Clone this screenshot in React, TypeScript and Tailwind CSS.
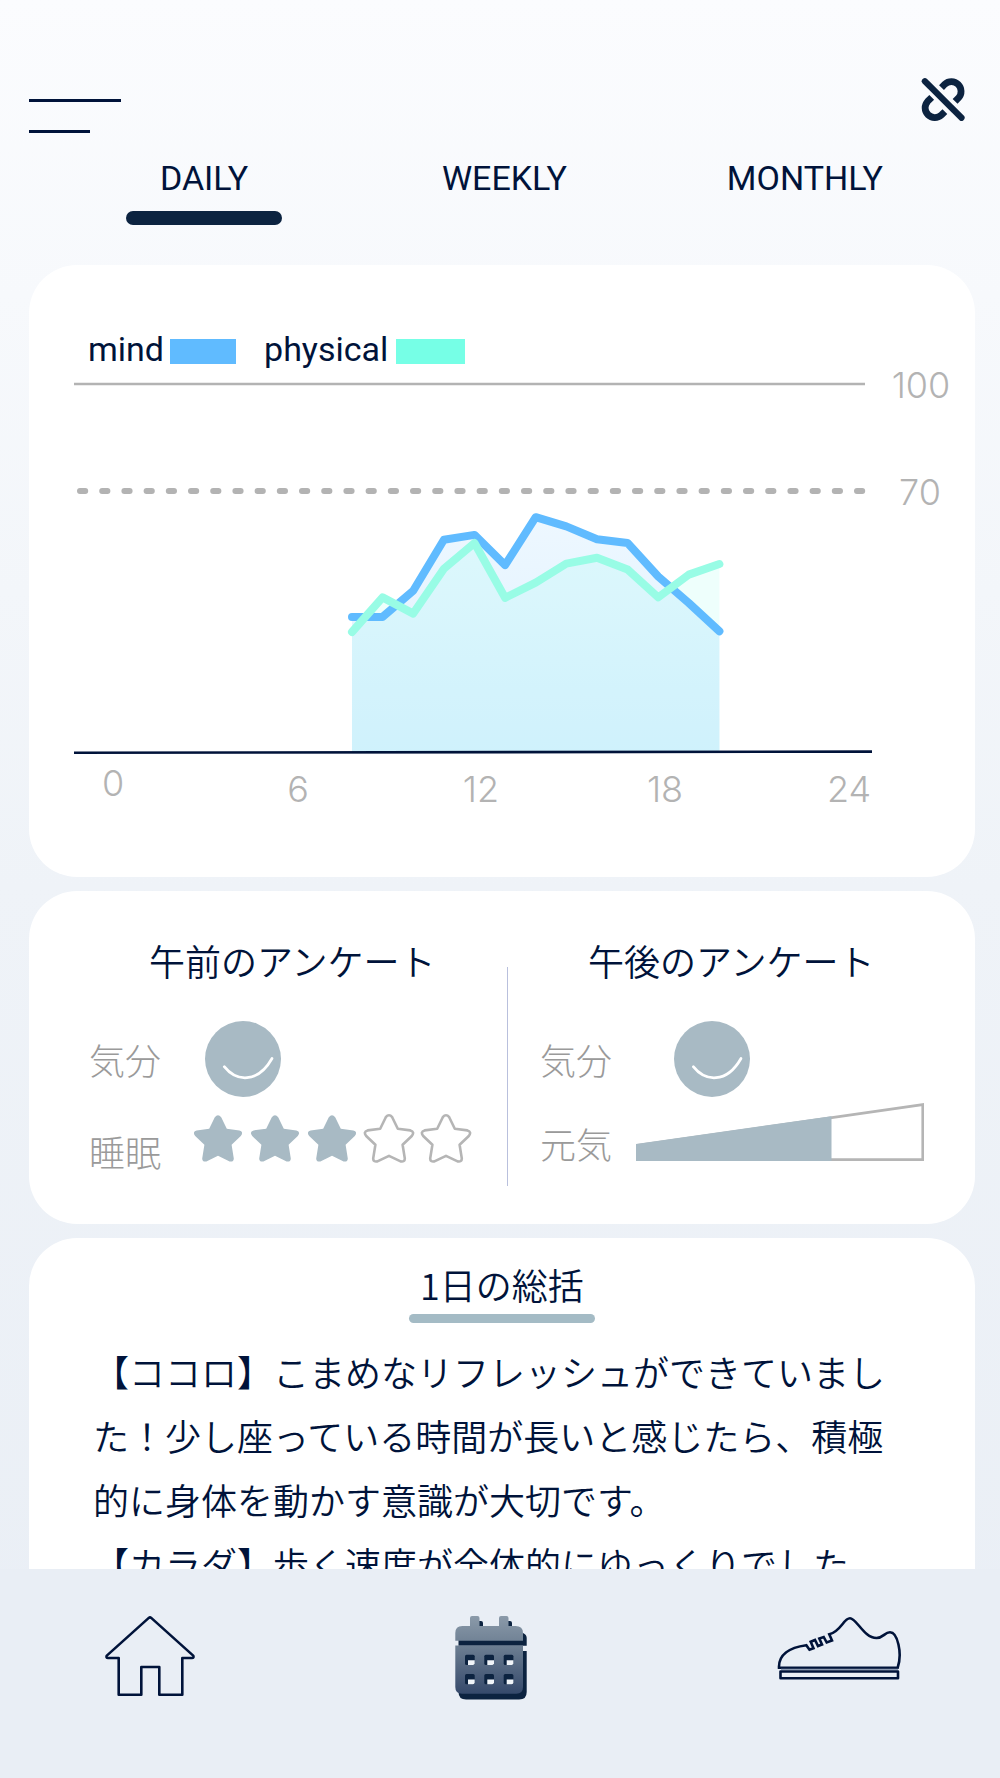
import React, { useState } from 'react';

const tabs = ['DAILY', 'WEEKLY', 'MONTHLY'];

const mind = [36.7, 36.7, 43.8, 57.7, 59, 50.8, 63.8, 61.3, 57.8, 56.8, 47.7, 40.5, 32.8];
const physical = [32.6, 42, 37.6, 49.8, 56.8, 41.9, 46, 51.2, 52.8, 49.6, 42, 48.2, 51.1];

// plot area inside the chart svg
const BASE_Y = 382;
const START_X = 323;
const STEP_X = 30.62;

const toPoints = (values: number[]) =>
  values.map((v, i) => `${(START_X + i * STEP_X).toFixed(1)},${(BASE_Y - v * 3.68).toFixed(1)}`).join(' ');

const toArea = (values: number[]) =>
  `${START_X},${BASE_Y} ${toPoints(values)} ${START_X + (values.length - 1) * STEP_X},${BASE_Y}`;

const UnlinkIcon: React.FC = () => (
  <svg className="size-11" viewBox="0 0 44 44" fill="none" stroke="#0c2340" strokeWidth={6.8}>
    <path d="M20.5 10.6l3.3-3.4a9.7 9.7 0 0 1 13.8 13.6l-3.5 3.6" />
    <path d="M10.7 20.4l-4.1 4a9.7 9.7 0 0 0 13.8 13.6l3.5-3.4" />
    <path d="M3 3.4l38 37.6" stroke="#fafbfd" strokeWidth={9.6} />
    <path d="M3.9 4.2l36.6 36.6" strokeLinecap="round" strokeWidth={6.2} />
  </svg>
);

const SmileIcon: React.FC = () => (
  <svg className="size-[76px]" viewBox="0 0 76 76" role="img" aria-label="気分">
    <circle cx="38" cy="38" r="38" fill="#a8bac4" />
    <path d="M19.3 45.7C31 60.5 52.5 63 67 37.5" fill="none" stroke="#fff" strokeWidth={2.7} strokeLinecap="round" />
  </svg>
);

const StarIcon: React.FC<{ filled: boolean }> = ({ filled }) => (
  <svg
    className="w-[52px] h-[50px]"
    viewBox="0 0 52 50"
    fill={filled ? '#a8bac4' : 'none'}
    stroke={filled ? 'none' : '#b5b5b5'}
    strokeWidth={2.6}
    strokeLinejoin="round"
  >
    <path d="M22.8 4.2Q26 .4 29.2 4.2L34.8 15.7L47.4 17.4Q52 18.8 48.8 23L39.6 31.8L41.8 45.4Q41.8 49.2 37.6 48.4L26 42.8L14.4 48.4Q10.2 49.2 10.2 45.4L12.4 31.8L3.2 23Q0 18.8 4.6 17.4L17.2 15.7Z" />
  </svg>
);

const EnergyMeter: React.FC = () => (
  <svg className="w-72 h-[58px]" viewBox="0 0 288 58" role="img" aria-label="元気">
    <path d="M1.5 42.4L286.7 1.6V56.6H1.5Z" fill="none" stroke="#b5b5b5" strokeWidth={2.6} />
    <path d="M0 41L195.5 13.2V58H0Z" fill="#a8bac4" />
  </svg>
);

const HomeIcon: React.FC = () => (
  <svg className="w-[90px] h-[82px]" viewBox="0 0 90 82" fill="none" stroke="#00133a" strokeWidth={2.6} strokeLinejoin="round">
    <path d="M43.8 2.9Q45 1.9 46.2 2.9L88.2 40.6Q89.2 43 87 43H77.3V79.7H54.3V52H36.3V79.7H13.7V43H3Q.8 43 1.8 40.6Z" />
  </svg>
);

const CalendarIcon: React.FC = () => (
  <svg className="w-[73px] h-[85px]" viewBox="0 0 73 85">
    <defs>
      <linearGradient id="cal" gradientUnits="userSpaceOnUse" x1="0" y1="0" x2="0" y2="80">
        <stop offset="0" stopColor="#8c9baa" />
        <stop offset="0.4" stopColor="#6b7d91" />
        <stop offset="1" stopColor="#34486a" />
      </linearGradient>
    </defs>
    <g fill="#0c2340">
      <path d="M24 6h3a2 2 0 0 1 2 2v6h-5zM53 6h3a2 2 0 0 1 2 2v6h-5z" />
      <path d="M4.5 18H69q3.700 1.500 3.700 5v7.800H4.500z" />
      <path d="M4.500 36h68.200v41q0 7.600-7.600 7.600H12.100q-7.600 0-7.600-7.600z" />
    </g>
    <g fill="url(#cal)">
      <path d="M16 11V3q0-2 2-2h5.500q2 0 2 2v8h19.500V3q0-2 2-2h5.500q2 0 2 2v8h7q7.500 0 7.500 7v7.700H1.300V18q0-7 7-7z" />
      <path d="M1.300 30.600H69V72q0 6.700-6.700 6.700H8q-6.700 0-6.700-6.700z" />
    </g>
    {[39.7, 59].map((y) =>
      [11, 30.3, 49.7].map((x) => (
        <g key={`${x}-${y}`}>
          <rect x={x} y={y} width="9.7" height="10.3" rx="1.5" fill="#0c2340" />
          <path d={`M${x + 3} ${y + 5.6}h6.700v3q0 1.700-1.700 1.700h-5v-3z`} fill="#f1f5f9" />
        </g>
      ))
    )}
  </svg>
);

const ShoeIcon: React.FC = () => (
  <svg className="w-[124px] h-[66px]" viewBox="0 0 124 66" fill="none" stroke="#00133a" strokeWidth={2.6}>
    <path d="M2 52.7C1.5 40 12 32.5 29.3 30.2L32.5 34.7L36.5 33.3L33.7 26.7L38 25L41 31L45 29.5L42.3 23.5L46.7 22L49.7 27.5L55 25.5L52.3 19.3C64 16.5 66.5 3.3 73 3.3C79.5 3.3 87 23 99.5 23C106.5 23 107.5 17.3 113 17.3C120.500 17.300 125.500 38 120.700 52.700Z" />
    <path d="M4 54.5H121" stroke="#8d9bb3" strokeWidth={1.6} />
    <path d="M3.5 56.5H121V63.3H3.5Z" strokeLinejoin="round" />
  </svg>
);

const ScoreChart: React.FC = () => (
  <svg
    className="block w-full"
    viewBox="0 -7 946 457"
    fontFamily='Inter, "Liberation Sans", sans-serif'
    fontSize="36"
    fontWeight="300"
  >
    <defs>
      <linearGradient id="mindFill" gradientUnits="userSpaceOnUse" x1="0" y1="148" x2="0" y2="383">
        <stop offset="0" stopColor="#60bbff" stopOpacity="0.11" />
        <stop offset="1" stopColor="#60bbff" stopOpacity="0.22" />
      </linearGradient>
    </defs>

    <path d="M45 14H836" stroke="#b3b3b3" strokeWidth={2.5} />
    <path d="M51 121H834" stroke="#b3b3b3" strokeWidth={6} strokeLinecap="round" strokeDasharray="5.2 17" />

    <polygon points={toArea(mind)} fill="url(#mindFill)" />
    <polygon points={toArea(physical)} fill="#78ffe6" fillOpacity="0.13" />
    <path d="M45 382.800L843 381.600" stroke="#00133a" strokeWidth={2.6} />
    <g fill="none" strokeWidth={8} strokeLinecap="round" strokeLinejoin="round">
      <polyline points={toPoints(mind)} stroke="#60bbff" />
      <polyline points={toPoints(physical)} stroke="#98fce5" />
    </g>

    <g fill="#b3b3b3" textAnchor="middle">
      <text x="892" y="28">100</text>
      <text x="891" y="135">70</text>
      <text x="84" y="426">0</text>
      <text x="269" y="432">6</text>
      <text x="452" y="432">12</text>
      <text x="636" y="432">18</text>
      <text x="820" y="432">24</text>
    </g>
  </svg>
);

const App: React.FC = () => {
  const [activeTab, setActiveTab] = useState('DAILY');

  return (
    <div
      lang="ja"
      className={`flex h-screen flex-col bg-linear-to-b from-[#fbfcfe] via-[#eff3f8] to-[#e9eef5] font-[350] text-[#00133a] font-["Noto_Sans_CJK_JP",sans-serif]`}
    >
      <header className="flex shrink-0 items-start justify-between pl-[29px] pr-[35px] pt-[77px]">
        <button type="button" aria-label="メニュー" className="mt-[22px] flex flex-col gap-7">
          <span className="h-[3px] w-[92px] bg-[#00133a]" />
          <span className="h-[3px] w-[61px] bg-[#00133a]" />
        </button>
        <button type="button" aria-label="連携解除">
          <UnlinkIcon />
        </button>
      </header>

      <nav className={`mt-[25px] flex shrink-0 items-start justify-between pl-[126px] pr-[117px] text-[34px] font-normal leading-10 font-[Roboto,"Liberation_Sans",sans-serif]`}>
        {tabs.map((tab) => (
          <button key={tab} type="button" onClick={() => setActiveTab(tab)} className="flex flex-col items-center gap-[13px]">
            <span>{tab}</span>
            {activeTab === tab && <span className="h-3.5 w-[156px] rounded-full bg-[#0c2340]" />}
          </button>
        ))}
      </nav>

      <main className="mt-10 flex min-h-0 flex-1 flex-col gap-3.5 overflow-y-auto pl-[29px] pr-[25px] [scrollbar-width:none]">
        <section className="shrink-0 rounded-[48px] bg-white pb-[57px] pt-[70px]">
          <div className={`flex h-7 items-center pl-[59px] text-[34px] font-normal leading-10 font-[Roboto,"Liberation_Sans",sans-serif]`}>
            <span>mind</span>
            <span className="ml-1.5 mt-1 h-[25px] w-[66px] bg-[#60bbff]" />
            <span className="ml-7">physical</span>
            <span className="ml-2 mt-1 h-[25px] w-[69px] bg-[#76ffe6]" />
          </div>
          <ScoreChart />
        </section>

        <section className="grid shrink-0 grid-cols-[478fr_1px_467fr] rounded-[48px] bg-white pb-[38px] pt-[49px] text-4xl">
          <div className="pl-[60px]">
            <h2 className="pl-[60px] leading-10">午前のアンケート</h2>
            <div className="mt-[41px] flex items-center gap-11 text-[#9a9a9a]">
              <span className="font-light">気分</span>
              <SmileIcon />
            </div>
            <div className="mt-4 flex h-[56px] items-start gap-[31px] text-[#9a9a9a]">
              <span className="self-end font-light leading-9">睡眠</span>
              <div className="flex gap-[5px]" role="img" aria-label="3 / 5">
                {[1, 2, 3, 4, 5].map((n) => (
                  <StarIcon key={n} filled={n <= 3} />
                ))}
              </div>
            </div>
          </div>
          <div className="mt-[27px] h-[219px] bg-[#b9c0dd]" />
          <div className="pl-8">
            <h2 className="pl-12 leading-10">午後のアンケート</h2>
            <div className="mt-[41px] flex items-center gap-[62px] text-[#9a9a9a]">
              <span className="font-light">気分</span>
              <SmileIcon />
            </div>
            <div className="mt-[6px] flex items-end gap-6 text-[#9a9a9a]">
              <span className="font-light leading-9">元気</span>
              <EnergyMeter />
            </div>
          </div>
        </section>

        <section className="shrink-0 rounded-t-[48px] bg-white px-16 pt-[26px] text-4xl">
          <div className="flex flex-col items-center">
            <h2 className="leading-10">1日の総括</h2>
            <span className="mt-2.5 h-[9px] w-[186px] rounded-full bg-[#a4bbc5]" />
          </div>
          <p className="mt-4 leading-16">
            【ココロ】こまめなリフレッシュができていました！少し座っている時間が長いと感じたら、積極的に身体を動かす意識が大切です。
            <br />
            【カラダ】歩く速度が全体的にゆっくりでした。
          </p>
        </section>
      </main>

      <footer className="flex shrink-0 items-start justify-between bg-[#e9eef5] pb-[78px] pl-[105px] pr-[99px] pt-[46px]">
        <a href="#home" aria-label="ホーム">
          <HomeIcon />
        </a>
        <a href="#calendar" aria-label="カレンダー" className="pl-2">
          <CalendarIcon />
        </a>
        <a href="#activity" aria-label="運動">
          <ShoeIcon />
        </a>
      </footer>
    </div>
  );
};

export default App;
